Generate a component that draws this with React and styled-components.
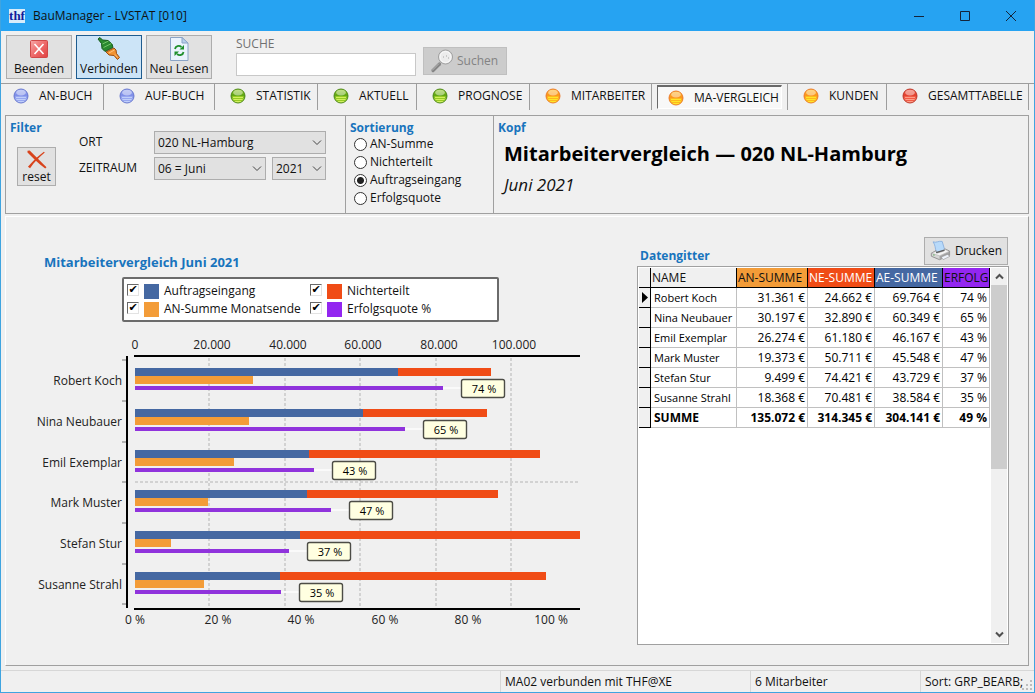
import { useState } from "react";
import styled, { createGlobalStyle, css } from "styled-components";

const tabs = [
  { label: "AN-BUCH", color: "blue", size: 103 },
  { label: "AUF-BUCH", color: "blue", size: 111 },
  { label: "STATISTIK", color: "green", size: 103 },
  { label: "AKTUELL", color: "green", size: 99 },
  { label: "PROGNOSE", color: "green", size: 113 },
  { label: "MITARBEITER", color: "orange", size: 122 },
  { label: "MA-VERGLEICH", color: "orange", size: 136 },
  { label: "KUNDEN", color: "orange", size: 99 },
  { label: "GESAMTTABELLE", color: "red", size: 142 },
];

const orbColors = {
  blue: { rim: "#5f6fcb", dark: "#7e8ee8", light: "#c0cffa", line: "#97a7f0" },
  green: { rim: "#3f7f0c", dark: "#5fa512", light: "#d2f05e", line: "#94cb22" },
  orange: { rim: "#ea7220", dark: "#fb961c", light: "#ffe628", line: "#fdb61f" },
  red: { rim: "#b82a1c", dark: "#e2402e", light: "#ff9c86", line: "#f25a46" },
};

const sortOptions = ["AN-Summe", "Nichterteilt", "Auftragseingang", "Erfolgsquote"];

const employees = [
  { name: "Robert Koch", an: 31361, ne: 24662, ae: 69764, quote: 74, y: 36 },
  { name: "Nina Neubauer", an: 30197, ne: 32890, ae: 60349, quote: 65, y: 77 },
  { name: "Emil Exemplar", an: 26274, ne: 61180, ae: 46167, quote: 43, y: 118 },
  { name: "Mark Muster", an: 19373, ne: 50711, ae: 45548, quote: 47, y: 158 },
  { name: "Stefan Stur", an: 9499, ne: 74421, ae: 43729, quote: 37, y: 199 },
  { name: "Susanne Strahl", an: 18368, ne: 70481, ae: 38584, quote: 35, y: 240 },
];

const total = { name: "SUMME", an: 135072, ne: 314345, ae: 304141, quote: 49 };

const series = [
  { key: "ae", label: "Auftragseingang", color: "#4568a2" },
  { key: "ne", label: "Nichterteilt", color: "#f04c16" },
  { key: "an", label: "AN-Summe Monatsende", color: "#f39c38" },
  { key: "quote", label: "Erfolgsquote %", color: "#9326f0" },
];

const format = (value) => String(value).replace(/\B(?=(\d{3})+$)/g, ".");

export default function App() {
  const [activeTab, setActiveTab] = useState("MA-VERGLEICH");
  const [sorting, setSorting] = useState("Auftragseingang");
  const [visible, setVisible] = useState({ ae: true, ne: true, an: true, quote: true });

  const toggle = (key) => setVisible({ ...visible, [key]: !visible[key] });

  return (
    <>
      <GlobalStyle />
      <Window>
        <TitleBar>
          <AppLogo aria-hidden="true">thf</AppLogo>
          <WindowTitle>BauManager - LVSTAT [010]</WindowTitle>
          <WindowButton aria-label="Minimieren">
            <svg width="12" height="12" stroke="#14243a" fill="none">
              <path d="M1 6.5H11" />
            </svg>
          </WindowButton>
          <WindowButton aria-label="Maximieren">
            <svg width="12" height="12" stroke="#14243a" fill="none">
              <path d="M1.5 1.5H10.5V10.5H1.5Z" />
            </svg>
          </WindowButton>
          <WindowButton aria-label="Schließen">
            <svg width="12" height="12" stroke="#14243a" fill="none">
              <path d="M1 1L11 11M11 1L1 11" />
            </svg>
          </WindowButton>
        </TitleBar>

        <Toolbar>
          <ToolButton>
            <CloseIcon />
            Beenden
          </ToolButton>
          <ToolButton $active>
            <PlugIcon />
            Verbinden
          </ToolButton>
          <ToolButton>
            <ReloadIcon />
            Neu Lesen
          </ToolButton>
          <SearchField>
            <label htmlFor="suche">SUCHE</label>
            <input id="suche" type="text" />
          </SearchField>
          <SearchButton disabled>
            <LensIcon />
            Suchen
          </SearchButton>
        </Toolbar>

        <TabBar>
          {tabs.map((tab) => (
            <TabCell key={tab.label}>
              <Tab $active={tab.label === activeTab} onClick={() => setActiveTab(tab.label)}>
                <Orb color={tab.color} />
                {tab.label}
              </Tab>
            </TabCell>
          ))}
        </TabBar>

        <Settings>
          <FilterPanel>
            <PanelTitle>Filter</PanelTitle>
            <FilterBody>
              <ResetButton>
                <CrossIcon />
                reset
              </ResetButton>
              <FilterGrid>
                <label htmlFor="ort">ORT</label>
                <Select>
                  <select id="ort">
                    <option>020 NL-Hamburg</option>
                  </select>
                  <Chevron />
                </Select>
                <label htmlFor="monat">ZEITRAUM</label>
                <Period>
                  <Select>
                    <select id="monat">
                      <option>06 = Juni</option>
                    </select>
                    <Chevron />
                  </Select>
                  <Select>
                    <select aria-label="Jahr">
                      <option>2021</option>
                    </select>
                    <Chevron />
                  </Select>
                </Period>
              </FilterGrid>
            </FilterBody>
          </FilterPanel>
          <SortPanel>
            <PanelTitle>Sortierung</PanelTitle>
            <SortList>
              {sortOptions.map((option) => (
                <RadioRow key={option}>
                  <input
                    type="radio"
                    name="sortierung"
                    checked={option === sorting}
                    onChange={() => setSorting(option)}
                  />
                  {option}
                </RadioRow>
              ))}
            </SortList>
          </SortPanel>
          <HeadPanel>
            <PanelTitle>Kopf</PanelTitle>
            <Heading>Mitarbeitervergleich — 020 NL-Hamburg</Heading>
            <Subheading>Juni 2021</Subheading>
          </HeadPanel>
        </Settings>

        <Content>
          <ChartColumn>
            <PanelTitle $large>Mitarbeitervergleich Juni 2021</PanelTitle>
            <Legend>
              {series.map((item) => (
                <LegendItem key={item.key}>
                  <input
                    type="checkbox"
                    checked={visible[item.key]}
                    onChange={() => toggle(item.key)}
                  />
                  <Swatch $color={item.color} />
                  {item.label}
                </LegendItem>
              ))}
            </Legend>
            <Chart visible={visible} />
          </ChartColumn>

          <GridColumn>
            <GridHeader>
              <PanelTitle>Datengitter</PanelTitle>
              <PrintButton>
                <PrinterIcon />
                Drucken
              </PrintButton>
            </GridHeader>
            <GridBox>
              <TableArea>
                <DataTable>
                  <colgroup>
                    <Col $width={12} />
                    <Col $width={86} />
                    <Col $width={71} />
                    <Col $width={67} />
                    <Col $width={68} />
                    <Col $width={47} />
                  </colgroup>
                  <thead>
                    <tr>
                      <HeadCell $bg="#f0f0f0" />
                      <HeadCell $bg="#f0f0f0">NAME</HeadCell>
                      <HeadCell $bg="#f39c38">AN-SUMME</HeadCell>
                      <HeadCell $bg="#f04c16" $light>NE-SUMME</HeadCell>
                      <HeadCell $bg="#4568a2" $light>AE-SUMME</HeadCell>
                      <HeadCell $bg="#9326f0">ERFOLG</HeadCell>
                    </tr>
                  </thead>
                  <tbody>
                    {[...employees, total].map((row, index) => (
                      <Row key={row.name} $bold={row === total}>
                        <Marker>
                          {index === 0 && (
                            <svg width="7" height="11">
                              <path d="M0 0L6 5.5L0 11Z" />
                            </svg>
                          )}
                        </Marker>
                        <NameCell $bold={row === total}>{row.name}</NameCell>
                        <NumberCell>{format(row.an)} €</NumberCell>
                        <NumberCell>{format(row.ne)} €</NumberCell>
                        <NumberCell>{format(row.ae)} €</NumberCell>
                        <NumberCell>{row.quote} %</NumberCell>
                      </Row>
                    ))}
                  </tbody>
                </DataTable>
              </TableArea>
              <ScrollBar>
                <ScrollButton aria-label="Nach oben">
                  <svg width="9" height="7" fill="none" stroke="#505050" strokeWidth="2">
                    <path d="M1 5.5L4.5 2L8 5.5" />
                  </svg>
                </ScrollButton>
                <ScrollTrack>
                  <ScrollThumb />
                </ScrollTrack>
                <ScrollButton aria-label="Nach unten">
                  <svg width="9" height="7" fill="none" stroke="#505050" strokeWidth="2">
                    <path d="M1 1.5L4.5 5L8 1.5" />
                  </svg>
                </ScrollButton>
              </ScrollBar>
            </GridBox>
          </GridColumn>
        </Content>

        <StatusBar>
          <span />
          <span>MA02 verbunden mit THF@XE</span>
          <span>6 Mitarbeiter</span>
          <span>Sort: GRP_BEARB;</span>
          <SizeGrip width="11" height="11" fill="#bdbdbd">
            <path d="M8 0h2v2h-2zM4 4h2v2h-2zM8 4h2v2h-2zM0 8h2v2h-2zM4 8h2v2h-2zM8 8h2v2h-2z" />
          </SizeGrip>
        </StatusBar>
      </Window>
    </>
  );
}

// amounts use the upper axis, the success rate uses the lower one
function Chart({ visible }) {
  const origin = 91;
  const right = 536;
  const amount = (value) => Math.round(value * 0.00377);
  const percent = (value) => Math.round(value * 4.16);

  return (
    <ChartSvg viewBox="0 0 557 300" role="img" aria-label="Mitarbeitervergleich">
      <g stroke="#d2d2d2" strokeWidth="2" strokeDasharray="3 2">
        {[20, 40, 60, 80, 100].map((k) => {
          const x = origin + amount(k * 1000) - 1;
          return <path key={k} d={`M${x} 26V276`} />;
        })}
        <path d={`M${origin} 150H${right}`} />
      </g>

      <g textAnchor="middle">
        {[0, 20, 40, 60, 80, 100].map((k) => (
          <g key={k}>
            <text x={origin + amount(k * 1000) + (k ? 2 : 0)} y="17">
              {k ? `${k}.000` : "0"}
            </text>
            <text x={origin + percent(k)} y="292">
              {k} %
            </text>
          </g>
        ))}
      </g>

      {employees.map((row) => {
        const stack = Math.min(
          amount((visible.ae ? row.ae : 0) + row.ne),
          right - origin
        );
        const end = origin + percent(row.quote);
        return (
          <g key={row.name}>
            <text x="78" y={row.y + 17} textAnchor="end">
              {row.name}
            </text>
            {visible.ne && (
              <rect x={origin} y={row.y} width={stack} height="8" fill="#f04c16" />
            )}
            {visible.ae && (
              <rect x={origin} y={row.y} width={amount(row.ae)} height="8" fill="#4568a2" />
            )}
            {visible.an && (
              <rect x={origin} y={row.y + 8} width={amount(row.an)} height="8" fill="#f39c38" />
            )}
            {visible.quote && (
              <g>
                <rect x={origin} y={row.y + 18} width={end - origin} height="4" fill="#9033dc" />
                <rect x={end} y={row.y + 19} width="18" height="2" fill="#fafafa" />
                <rect
                  x={end + 18.5}
                  y={row.y + 11.5}
                  width="43"
                  height="18"
                  rx="2"
                  fill="#ffffe1"
                  stroke="#4c4c46"
                  strokeWidth="1.4"
                />
                <TagText x={end + 41} y={row.y + 25} textAnchor="middle">
                  {row.quote} %
                </TagText>
              </g>
            )}
          </g>
        );
      })}

      <g stroke="#b4b4b4" strokeWidth="2">
        {[28, 69, 110, 150, 191, 232, 272].map((y) => (
          <path key={y} d={`M78 ${y}H82`} />
        ))}
      </g>
      <path d="M83 24V276M90 24H536M90 277H536" stroke="#000" strokeWidth="2" />
    </ChartSvg>
  );
}

function Orb({ color }) {
  const { rim, dark, light, line } = orbColors[color];
  const id = `orb-${color}`;
  return (
    <svg width="16" height="16" viewBox="0 0 16 16">
      <defs>
        <linearGradient id={id} x1="0" y1="0" x2="0" y2="1">
          <stop offset="0" stopColor={line} />
          <stop offset="0.45" stopColor={dark} />
          <stop offset="1" stopColor={light} />
        </linearGradient>
      </defs>
      <circle cx="8" cy="8" r="7" fill={`url(#${id})`} stroke={rim} strokeWidth="0.9" />
      <ellipse cx="8" cy="4.6" rx="4.8" ry="2.8" fill="#fff" opacity="0.45" />
      <path d="M2.5 8.5H13.5M3 10.5H13M4 12.5H12" stroke={line} />
      <path d="M3 9.5H13M3.5 11.5H12.5M5.5 13.5H10.5" stroke={light} />
    </svg>
  );
}

function CloseIcon() {
  return (
    <svg width="24" height="24" viewBox="0 0 24 24">
      <defs>
        <linearGradient id="close-bg" x1="0" y1="0" x2="1" y2="1">
          <stop offset="0" stopColor="#f6a8a8" />
          <stop offset="0.5" stopColor="#ee6a6a" />
          <stop offset="1" stopColor="#e04242" />
        </linearGradient>
      </defs>
      <rect x="3.5" y="3.5" width="17" height="17" rx="1" fill="url(#close-bg)" stroke="#d04848" />
      <path d="M7.5 7L16.5 17M16.5 7L7.5 17" stroke="#fff" strokeWidth="1.6" />
    </svg>
  );
}

function PlugIcon() {
  return (
    <svg width="24" height="24" viewBox="0 0 24 24">
      <path
        d="M1 2L3 0.5L5.5 3L11 3.5L15 7L16 10.5L8 14.5L5 11.5L4.5 6.5Z"
        fill="#2a8a30"
        stroke="#175a1c"
      />
      <path d="M5.5 7L11.5 4M6.500 10.500L14.500 6.500" stroke="#71c468" />
      <path
        d="M9 15L17 11L19 13L19.500 16.500L22.500 20.500L20.500 22.500L17 18.500L12 18Z"
        fill="#f29332"
        stroke="#9c4c10"
      />
      <path d="M12 16L17.500 13M18 17.500L20.500 20.500" stroke="#ffc37c" />
    </svg>
  );
}

function ReloadIcon() {
  return (
    <svg width="24" height="24" viewBox="0 0 24 24">
      <path d="M3.5 0.5H15L21 6V23.5H3.5Z" fill="#eaf3fd" stroke="#8ba4c6" />
      <path d="M15 0.5V6H21Z" fill="#b9d0ec" stroke="#8ba4c6" />
      <path d="M8 12C8.5 9 12 8 14.5 10" fill="none" stroke="#1f8f2c" strokeWidth="1.8" />
      <path d="M17 8V12.5H12.5Z" fill="#1f8f2c" />
      <path d="M16.5 15C16 18 12.500 19 10 17" fill="none" stroke="#1f8f2c" strokeWidth="1.8" />
      <path d="M7.5 19V14.5H12Z" fill="#1f8f2c" />
    </svg>
  );
}

function LensIcon() {
  return (
    <svg width="24" height="24" viewBox="0 0 24 24">
      <path d="M9.500 15L3 21.500" stroke="#858585" strokeWidth="3.2" strokeLinecap="round" />
      <path d="M9 14.500L2 21.500" stroke="#b9b9b9" />
      <circle cx="15.5" cy="8" r="7" fill="#e6e6e6" stroke="#999" strokeWidth="0.9" />
      <circle cx="15.5" cy="8" r="5.5" fill="#ececec" stroke="#fafafa" />
      <path d="M13 8H14M16 7H17M18 9H19" stroke="#a6a6a6" />
    </svg>
  );
}

function CrossIcon() {
  return (
    <svg width="24" height="22" viewBox="0 0 24 22" fill="#d8431b">
      <path d="M1 1L3.5 0.5C10 7 17 13.5 23 20L21.5 21.5C14 16 7 9 1 3Z" />
      <path d="M20 2L21 3C14 9 9 14 4 21L1.5 19.5C7 13 13 7 20 2Z" />
    </svg>
  );
}

function PrinterIcon() {
  return (
    <svg width="24" height="24" viewBox="0 0 24 24">
      <path d="M3.5 1.5C7 3 10 0 14 1L17 11L7 14C6 8 6 5 3.5 1.5Z" fill="#b8dafa" stroke="#88aede" />
      <path
        d="M1.5 14.5L7 11.5V14L17 11.5V9.5L22.5 12V17L11 22L1.5 18Z"
        fill="#d6d6d6"
        stroke="#8b8b8b"
      />
      <path
        d="M2 14.5L11 17.5L22 12.5L17 10L16.5 12L8 14.5L6.5 12.5Z"
        fill="#f4f4f4"
        stroke="#aaa"
        strokeWidth="0.6"
      />
      <path d="M7 14L16.5 11" stroke="#606060" strokeWidth="1.5" />
      <path d="M11 18V22L22 17V13Z" fill="#a3a3a3" />
      <path d="M13 19L20 16L23 18L15 22Z" fill="#eef3fa" stroke="#8b8b8b" strokeWidth="0.6" />
      <circle cx="4.5" cy="16.5" r="0.8" fill="#4aa84a" />
    </svg>
  );
}

function Chevron() {
  return (
    <svg width="10" height="6" fill="none" stroke="#444">
      <path d="M1 0.5L5 4.5L9 0.5" />
    </svg>
  );
}

const GlobalStyle = createGlobalStyle`
  * {
    box-sizing: border-box;
  }

  body {
    margin: 0;
    background: #f0f0f0;
  }

  body, button, input, select {
    font-family: "Open Sans", "Noto Sans", sans-serif;
    font-size: 12px;
    line-height: 16px;
    color: #111;
  }
`;

const Window = styled.div`
  display: flex;
  flex-direction: column;
  min-height: 100vh;
  background: #f0f0f0;
  border: 1px solid #3fa4e0;
  border-top: none;
`;

const TitleBar = styled.header`
  display: flex;
  align-items: center;
  height: 31px;
  padding-left: 8px;
  background: #26a3f2;
`;

const AppLogo = styled.span`
  width: 16px;
  height: 14px;
  margin-right: 8px;
  background: #d8ecfa;
  color: #101c9c;
  font: bold 13px/13px "Liberation Serif", serif;
  text-align: center;
`;

const WindowTitle = styled.span`
  flex: 1;
`;

const WindowButton = styled.button`
  display: flex;
  align-items: center;
  justify-content: center;
  width: 46px;
  height: 30px;
  padding: 0;
  border: none;
  background: none;
`;

const Toolbar = styled.div`
  display: flex;
  height: 52px;
  gap: 4px;
  padding: 4px 5px;
`;

const buttonFace = css`
  display: flex;
  align-items: center;
  border: 1px solid #adadad;
  background: #e1e1e1;
`;

const ToolButton = styled.button`
  ${buttonFace}
  flex-direction: column;
  width: 66px;
  padding: 1px 0 0;
  white-space: nowrap;

  ${({ $active }) =>
    $active &&
    css`
      background: #cce4f7;
      border-color: #1f5c8f;
    `}
`;

const SearchField = styled.div`
  display: flex;
  flex-direction: column;
  width: 180px;
  margin-left: 20px;
  color: #707070;

  label {
    height: 18px;
    line-height: 18px;
  }

  input {
    height: 23px;
    border: 1px solid #c8c8c8;
    background: #fff;
  }
`;

const SearchButton = styled.button`
  ${buttonFace}
  gap: 3px;
  width: 84px;
  height: 28px;
  margin: 12px 0 0 3px;
  padding: 0 6px;
  border-color: #bfbfbf;
  background: #ccc;
  color: #838383;
`;

const TabBar = styled.nav`
  display: grid;
  grid-template-columns: ${tabs.map((tab) => `${tab.size}fr`).join(" ")};
  height: 32px;
  padding: 0 5px 5px 0;
  border-top: 1px solid #9d9d9d;
`;

const Tab = styled.button`
  display: flex;
  flex: 1;
  align-items: center;
  gap: 10px;
  padding: 0 0 2px 15px;
  border: none;
  background: none;
  white-space: nowrap;

  ${({ $active }) =>
    $active &&
    css`
      margin: 1px 5px 1px 5px;
      padding: 0 0 0 10px;
      border: 1px solid #fff;
      border-top: 2px solid #696969;
      border-left: 1px solid #696969;
      background: #f8f8f8;
    `}
`;

const TabCell = styled.div`
  display: flex;
  border-right: 1px solid #9d9d9d;

  &:first-child ${Tab} {
    padding-left: 12px;
  }
`;

const Settings = styled.section`
  display: grid;
  grid-template-columns: 340px 148px 1fr;
  height: 99px;
  margin: 0 5px 0 4px;
  border: 1px solid #a0a0a0;
`;

const PanelTitle = styled.h2`
  margin: 0;
  color: #1874bd;
  font-size: ${({ $large }) => ($large ? 13 : 12)}px;
  line-height: 18px;
`;

const panel = css`
  padding: 3px 4px;
  border-right: 1px solid #a0a0a0;
`;

const FilterPanel = styled.div`
  ${panel}
  padding-right: 19px;
`;

const FilterBody = styled.div`
  display: flex;
  padding-left: 7px;
`;

const ResetButton = styled.button`
  ${buttonFace}
  flex-direction: column;
  width: 39px;
  height: 39px;
  margin-top: 10px;
  padding: 2px 0 0;
  line-height: 16px;
`;

const FilterGrid = styled.div`
  display: grid;
  flex: 1;
  grid-template-columns: 75px 1fr;
  grid-auto-rows: 26px;
  margin: -6px 0 0 23px;

  label {
    line-height: 22px;
  }
`;

const Period = styled.div`
  display: grid;
  grid-template-columns: 112px 1fr;
  gap: 6px;
`;

const Select = styled.div`
  display: grid;
  height: 23px;

  select {
    grid-area: 1 / 1;
    appearance: none;
    padding: 0 3px;
    border: 1px solid #adadad;
    border-radius: 0;
    background: #e1e1e1;
  }

  svg {
    grid-area: 1 / 1;
    align-self: center;
    justify-self: end;
    margin-right: 4px;
    pointer-events: none;
  }
`;

const SortPanel = styled.div`
  ${panel}
`;

const SortList = styled.div`
  margin-top: -2px;
`;

const RadioRow = styled.label`
  display: flex;
  align-items: center;
  gap: 3px;
  height: 18px;
  padding-left: 4px;

  input {
    appearance: none;
    width: 13px;
    height: 13px;
    margin: 0;
    border: 1px solid #333;
    border-radius: 50%;
    background: #fff;
  }

  input:checked {
    background: radial-gradient(circle, #222 0 3px, #fff 4px);
  }
`;

const HeadPanel = styled.div`
  padding: 3px 4px;
`;

const Heading = styled.h1`
  margin: 3px 0 0 6px;
  color: #000;
  font-size: 20px;
  line-height: 28px;
`;

const Subheading = styled.p`
  margin: 5px 0 0 6px;
  font-size: 17px;
  font-style: italic;
  line-height: 24px;
`;

const Content = styled.main`
  display: grid;
  flex: 1;
  grid-template-columns: minmax(0, 1fr) 372px;
  gap: 36px;
  margin: 2px 5px 4px 4px;
  padding: 20px 19px 20px 38px;
  border: 1px solid #a0a0a0;
  border-top-color: #fff;
  border-left-color: #fff;
`;

const ChartColumn = styled.section`
  padding-top: 16px;
`;

const Legend = styled.div`
  display: grid;
  grid-template-columns: 183px 1fr;
  grid-auto-rows: 18px;
  width: 377px;
  height: 45px;
  margin: 6px 0 10px 78px;
  padding: 3px;
  border: 2px solid #6b6b6b;
  border-radius: 2px;
  background: #fff;
`;

const LegendItem = styled.label`
  display: flex;
  align-items: center;
  white-space: nowrap;

  input {
    appearance: none;
    width: 12px;
    height: 12px;
    margin: 0 5px 2px 0;
    border: 1px solid #e3e3e3;
    border-top-color: #696969;
    border-left-color: #696969;
    background: #fff;
  }

  input:checked::before {
    content: "✔";
    display: block;
    color: #000;
    font: 11px/10px "DejaVu Sans", sans-serif;
    text-align: center;
  }
`;

const Swatch = styled.span`
  width: 15px;
  height: 15px;
  margin-right: 5px;
  background: ${({ $color }) => $color};
`;

const ChartSvg = styled.svg`
  display: block;
  width: 100%;
  overflow: visible;

  text {
    font-size: 12px;
    fill: #222;
  }
`;

const TagText = styled.text`
  && {
    font-size: 11px;
    fill: #000;
  }
`;

const GridColumn = styled.section`
  display: flex;
  flex-direction: column;
`;

const GridHeader = styled.div`
  display: flex;
  align-items: flex-end;
  justify-content: space-between;
  padding: 0 1px 1px 3px;
`;

const PrintButton = styled.button`
  ${buttonFace}
  gap: 4px;
  width: 84px;
  height: 28px;
  padding: 0 5px;
`;

const GridBox = styled.div`
  display: flex;
  flex: 1;
  padding: 1px;
  border: 1px solid #a0a0a0;
  background: #fff;
`;

const TableArea = styled.div`
  flex: 1;
`;

const DataTable = styled.table`
  table-layout: fixed;
  width: 351px;
  border-collapse: separate;
  border-spacing: 0;
  color: #000;

  tr {
    height: 20px;
  }

  td {
    padding: 0 2px 0 3px;
    border-right: 1px solid #c0c0c0;
    border-bottom: 1px solid #c0c0c0;
    line-height: 19px;
    white-space: nowrap;
  }
`;

const Col = styled.col`
  width: ${({ $width }) => $width}px;
`;

const HeadCell = styled.th`
  padding: 0 0 0 1px;
  border-right: 1px solid #000;
  border-bottom: 1px solid #000;
  background: ${({ $bg }) => $bg};
  color: ${({ $light }) => ($light ? "#fff" : "#111")};
  font-weight: normal;
  line-height: 19px;
  text-align: left;
  white-space: nowrap;
`;

const Row = styled.tr`
  font-weight: ${({ $bold }) => ($bold ? "bold" : "normal")};
`;

const Marker = styled.td`
  && {
    padding: 0;
    border-color: #000;
    background: #f0f0f0;
  }

  svg {
    display: block;
    margin-left: 3px;
  }
`;

const NameCell = styled.td`
  font-size: ${({ $bold }) => ($bold ? 12 : 11)}px;
`;

const NumberCell = styled.td`
  text-align: right;
`;

const ScrollBar = styled.div`
  display: flex;
  flex-direction: column;
  width: 16px;
  background: #f0f0f0;
`;

const ScrollButton = styled.button`
  display: flex;
  align-items: center;
  justify-content: center;
  height: 17px;
  padding: 0;
  border: none;
  background: none;
`;

const ScrollTrack = styled.div`
  flex: 1;
`;

const ScrollThumb = styled.div`
  height: 54%;
  background: #cdcdcd;
`;

const StatusBar = styled.footer`
  display: grid;
  grid-template-columns: 499px 250px 170px 1fr;
  position: relative;
  height: 22px;
  border-top: 1px solid #d7d7d7;

  span {
    padding: 3px 0 0 4px;
    white-space: nowrap;
  }

  span + span {
    border-left: 1px solid #d7d7d7;
  }
`;

const SizeGrip = styled.svg`
  position: absolute;
  right: 1px;
  bottom: 1px;
`;
